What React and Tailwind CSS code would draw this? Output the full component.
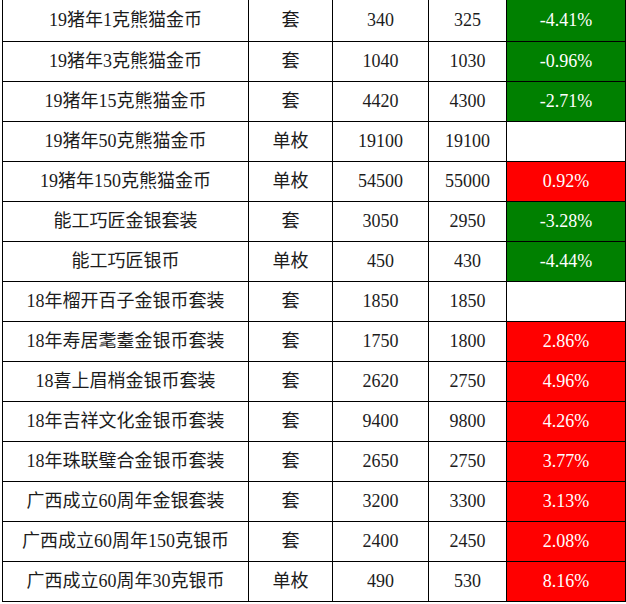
const rows = [
  ['19猪年1克熊猫金币', '套', '340', '325', '-4.41%', 'down'],
  ['19猪年3克熊猫金币', '套', '1040', '1030', '-0.96%', 'down'],
  ['19猪年15克熊猫金币', '套', '4420', '4300', '-2.71%', 'down'],
  ['19猪年50克熊猫金币', '单枚', '19100', '19100', '', ''],
  ['19猪年150克熊猫金币', '单枚', '54500', '55000', '0.92%', 'up'],
  ['能工巧匠金银套装', '套', '3050', '2950', '-3.28%', 'down'],
  ['能工巧匠银币', '单枚', '450', '430', '-4.44%', 'down'],
  ['18年榴开百子金银币套装', '套', '1850', '1850', '', ''],
  ['18年寿居耄耋金银币套装', '套', '1750', '1800', '2.86%', 'up'],
  ['18喜上眉梢金银币套装', '套', '2620', '2750', '4.96%', 'up'],
  ['18年吉祥文化金银币套装', '套', '9400', '9800', '4.26%', 'up'],
  ['18年珠联璧合金银币套装', '套', '2650', '2750', '3.77%', 'up'],
  ['广西成立60周年金银套装', '套', '3200', '3300', '3.13%', 'up'],
  ['广西成立60周年150克银币', '套', '2400', '2450', '2.08%', 'up'],
  ['广西成立60周年30克银币', '单枚', '490', '530', '8.16%', 'up'],
];

export default function App() {
  return (
    <div
      className="w-[626px] h-[604px] bg-white overflow-hidden text-[18px] text-[#1c1c1c]"
      style={{ fontFamily: '"Liberation Serif", "Noto Sans CJK SC", serif' }}
    >
      {rows.map(([name, unit, before, after, pct, trend], i) => (
        <div
          key={name}
          className={`ml-[2px] flex border-l border-b border-black ${i === 0 ? 'h-[42px]' : 'h-[40px]'}`}
        >
          <div className="w-[246px] flex items-center justify-center border-r border-black">
            {name}
          </div>
          <div className="w-[84px] flex items-center justify-center border-r border-black">
            {unit}
          </div>
          <div className="w-[96px] flex items-center justify-center border-r border-black">
            {before}
          </div>
          <div className="w-[78px] flex items-center justify-center border-r border-black">
            {after}
          </div>
          <div
            className={`w-[119px] flex items-center justify-center border-r border-black text-white ${
              trend === 'down' ? 'bg-[#008000]' : trend === 'up' ? 'bg-[#ff0000]' : 'bg-white'
            }`}
          >
            {pct}
          </div>
        </div>
      ))}
    </div>
  );
}
